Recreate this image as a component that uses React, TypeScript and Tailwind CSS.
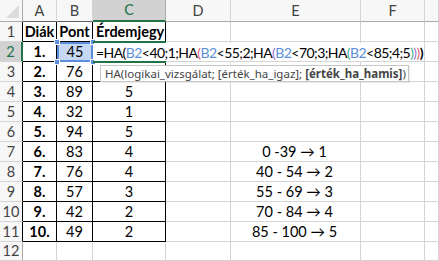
import React from "react";

const COLS = ["A", "B", "C", "D", "E", "F", ""];

// C3 is hidden under the function tooltip
const ROWS: string[][] = [
  ["Diák", "Pont", "Érdemjegy", "", "", ""],
  ["1.", "", "", "", "", ""],
  ["2.", "76", "", "", "", ""],
  ["3.", "89", "5", "", "", ""],
  ["4.", "32", "1", "", "", ""],
  ["5.", "94", "5", "", "", ""],
  ["6.", "83", "4", "", "0 -39 → 1", ""],
  ["7.", "76", "4", "", "40 - 54 → 2", ""],
  ["8.", "57", "3", "", "55 - 69 → 3", ""],
  ["9.", "42", "2", "", "70 - 84 → 4", ""],
  ["10.", "49", "2", "", "85 - 100 → 5", ""],
  ["", "", "", "", "", ""],
];

const cellFont = { fontFamily: "Lato, 'Liberation Sans', sans-serif" };

function Formula() {
  const ref = "text-[#5b8ed8]";
  return (
    <span className="whitespace-nowrap text-black text-[14px] tracking-[-0.56px]">
      =HA(<span className={ref}>B2</span>&lt;40;1;HA
      <span className="text-[#e0607e]">(</span>
      <span className={ref}>B2</span>&lt;55;2;HA
      <span className="text-[#9b6fd0]">(</span>
      <span className={ref}>B2</span>&lt;70;3;HA
      <span className="text-[#3fae8f]">(</span>
      <span className={ref}>B2</span>&lt;85;4;5
      <span className="text-[#3fae8f]">)</span>
      <span className="text-[#9b6fd0]">)</span>
      <span className="text-[#e0607e]">)</span>
      <span className="font-bold">)</span>
    </span>
  );
}

export default function App() {
  return (
    <div className="relative w-[439px] h-[261px] overflow-hidden bg-white text-[14.5px]" style={cellFont}>
      <div className="grid grid-cols-[23px_34px_36px_73px_65px_130px_64px_14px] grid-rows-[22px_repeat(11,20px)_19px]">
        {/* column headers */}
        <div className="relative bg-[#f7f7f7] border-r border-b border-[#ababab]">
          <svg className="absolute right-[3px] bottom-[3px]" width="13" height="13" viewBox="0 0 13 13">
            <polygon points="13,0 13,13 0,13" fill="#dcdcdc" />
          </svg>
        </div>
        {COLS.map((c, i) => {
          const sel = c === "C";
          const tbl = i < 2;
          return (
            <div
              key={"h" + i}
              className={
                "flex items-end justify-center leading-none border-r " +
                (sel
                  ? "bg-[#d2d2d2] text-[#217346] border-b-2 border-b-[#217346] border-r-[#ababab]"
                  : tbl
                  ? "bg-[#f7f7f7] text-[#444] border-b border-b-[#5f5f5f] border-r-[#d4d4d4]"
                  : "bg-[#f7f7f7] text-[#444] border-b border-[#d4d4d4] border-b-[#ababab]")
              }
            >
              <span className="pb-[3px]">{c}</span>
            </div>
          );
        })}

        {ROWS.map((row, ri) => {
          const r = ri + 1;
          const inTableRow = r <= 11;
          const selRow = r === 2;
          return (
            <React.Fragment key={"r" + r}>
              <div
                className={
                  "flex items-center justify-center border-b border-b-[#d4d4d4] " +
                  (selRow
                    ? "bg-[#d2d2d2] text-[#217346] border-r-2 border-r-[#217346]"
                    : inTableRow
                    ? "bg-[#f7f7f7] text-[#444] border-r border-r-black"
                    : "bg-[#f7f7f7] text-[#444] border-r border-r-[#ababab]")
                }
              >
                {r}
              </div>
              {row.concat([""]).map((v, ci) => {
                const tbl = inTableRow && ci < 3;
                const bold = tbl && (ci === 0 || r === 1);
                const align = r === 1 && ci === 2 ? "justify-start pl-[3px]" : "justify-center";
                return (
                  <div
                    key={"c" + r + ci}
                    className={
                      "flex items-center whitespace-nowrap text-black " +
                      align +
                      " " +
                      (bold ? "font-bold " : "") +
                      (tbl
                        ? "border-r border-b border-black"
                        : "border-r border-b border-[#d4d4d4]") +
                      (ci === 4 ? " pr-[2px]" : "")
                    }
                  >
                    {v}
                  </div>
                );
              })}
            </React.Fragment>
          );
        })}
      </div>

      {/* B2 range marker */}
      <div className="absolute left-[57px] top-[42px] w-[36px] h-[20px] bg-[#c6d8f4] border-2 border-[#5b8ed8] flex items-center justify-center text-black">
        45
      </div>
      {[
        "left-[54px] top-[39px]",
        "left-[90px] top-[39px]",
        "left-[54px] top-[59px]",
        "left-[90px] top-[59px]",
      ].map((p) => (
        <div key={p} className={"absolute w-[6px] h-[6px] bg-[#5b8ed8] border border-white " + p} />
      ))}

      {/* active cell C2 in edit mode */}
      <div className="absolute left-[93px] top-[41px] w-[73px] h-[22px] border-t-2 border-b-2 border-[#217346]" />
      <div className="absolute left-[94px] top-[43px] w-[330px] h-[18px] bg-white flex items-center pl-[2px]">
        <Formula />
        <span className="ml-[1px] w-[2px] h-[16px] bg-black" />
      </div>

      {/* function tooltip */}
      <div
        className="absolute left-[100px] top-[65px] h-[17px] w-[309px] bg-white border border-[#c6c6c6] flex items-center pl-[4px] text-[11.5px] text-[#444] whitespace-nowrap shadow-[1px_1px_1px_rgba(0,0,0,0.08)]"
        style={{ fontFamily: "'Noto Sans', 'Open Sans', sans-serif" }}
      >
        HA(logikai_vizsgálat; [érték_ha_igaz];&nbsp;<span className="font-bold">[érték_ha_hamis]</span>)
      </div>
    </div>
  );
}
